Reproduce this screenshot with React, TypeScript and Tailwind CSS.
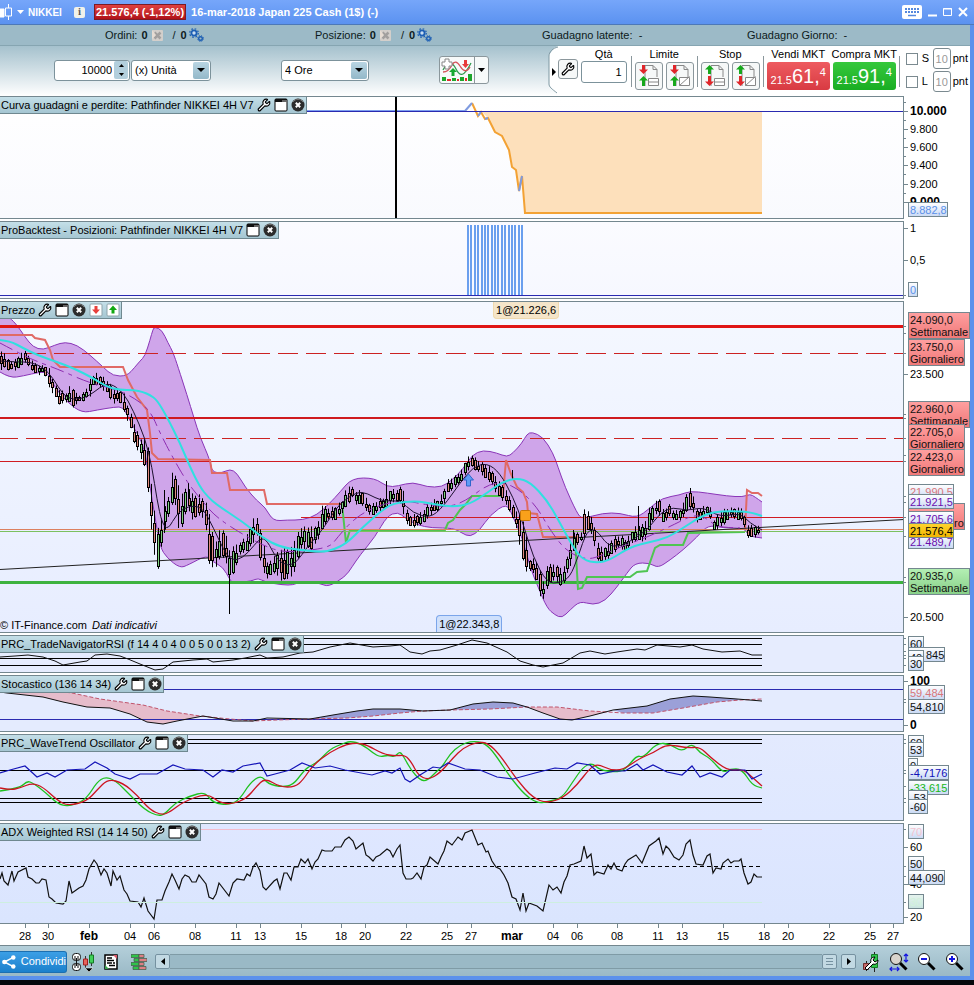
import type { ReactNode } from 'react';
import { Wrench } from 'lucide-react';

type Point = [number, number];

const UPPER: Point[] = [
  [0, 310], [10, 318], [17, 325], [25, 337], [33, 347], [43, 350], [55, 345], [65, 342], [77, 345], [90, 355],
  [103, 367], [113, 376], [127, 376], [135, 367], [140, 361], [145, 356], [150, 340], [153, 329], [155, 327], [162, 330], [168, 343],
  [173, 352], [178, 367], [187, 395], [194, 418], [200, 437], [210, 460], [212, 472], [222, 473], [230, 469], [237, 473],
  [245, 487], [257, 501], [265, 507], [273, 521], [287, 520], [303, 520], [317, 515], [330, 503], [340, 492], [352, 478],
  [375, 478], [387, 487], [398, 486], [413, 482], [427, 487], [442, 487], [452, 480], [463, 469], [472, 455], [483, 450],
  [497, 453], [507, 457], [513, 453], [522, 443], [527, 434], [532, 432], [543, 437], [553, 453], [558, 467], [565, 487],
  [577, 513], [582, 519], [603, 513], [620, 513], [637, 518], [650, 508], [662, 498], [680, 495], [690, 491], [707, 493],
  [727, 496], [743, 497], [750, 494], [755, 497], [762, 502],
];

const LOWER: Point[] = [
  [0, 372], [10, 378], [23, 376], [40, 372], [48, 373], [55, 388], [67, 402], [82, 413], [97, 410], [115, 407],
  [123, 407], [128, 417], [137, 433], [145, 450], [150, 487], [155, 517], [160, 547], [167, 558], [180, 568], [188, 565],
  [207, 555], [213, 562], [223, 567], [230, 580], [233, 583], [252, 581], [258, 578], [265, 582], [283, 585], [293, 585],
  [300, 582], [320, 583], [328, 587], [345, 577], [352, 567], [360, 555], [375, 537], [387, 516], [398, 512], [405, 518],
  [417, 525], [432, 528], [453, 528], [462, 533], [470, 537], [480, 530], [490, 515], [507, 503], [513, 517], [522, 537],
  [530, 567], [538, 587], [547, 608], [555, 615], [562, 618], [570, 610], [580, 601], [593, 605], [605, 601], [617, 587],
  [627, 573], [635, 563], [650, 563], [658, 568], [670, 560], [683, 550], [697, 537], [708, 525], [723, 528], [745, 528],
  [748, 536], [762, 538],
];

const CYAN: Point[] = [
  [0, 340], [10, 341], [23, 348], [37, 355], [57, 362], [73, 368], [93, 378], [107, 387], [120, 390], [134, 390],
  [143, 392], [150, 395], [157, 400], [167, 417], [180, 443], [190, 467], [200, 487], [208, 497], [217, 505], [243, 522],
  [263, 538], [280, 547], [300, 550], [322, 552], [333, 550], [347, 543], [363, 527], [380, 512], [393, 503], [417, 501],
  [433, 504], [453, 507], [470, 504], [487, 493], [502, 482], [517, 478], [530, 482], [547, 500], [560, 523], [573, 547],
  [583, 560], [597, 563], [610, 560], [630, 547], [650, 542], [667, 538], [683, 528], [700, 517], [713, 512], [730, 511],
  [750, 512], [762, 516],
];

const MIDDLE: Point[] = [
  [0, 343], [13, 350], [33, 360], [60, 370], [87, 382], [107, 387], [130, 395], [150, 410], [160, 433], [173, 458],
  [187, 482], [203, 502], [217, 518], [247, 537], [267, 547], [283, 552], [305, 551], [330, 547], [337, 538], [350, 523],
  [363, 513], [380, 505], [403, 500], [427, 505], [450, 507], [467, 500], [487, 485], [503, 482], [520, 490], [537, 507],
  [550, 530], [567, 552], [587, 560], [603, 555], [620, 547], [650, 536], [673, 525], [693, 515], [705, 517], [717, 527],
  [740, 528],
];

const AVERAGE: Point[] = [
  [0, 361], [17, 362], [30, 362], [43, 367], [53, 378], [63, 395], [73, 400], [88, 397], [100, 387], [110, 383],
  [123, 392], [133, 410], [145, 438], [152, 467], [157, 500], [162, 523], [168, 530], [177, 513], [190, 505], [203, 508],
  [213, 527], [227, 557], [237, 561], [248, 553], [260, 538], [267, 540], [277, 560], [288, 566], [297, 562], [307, 547],
  [320, 533], [330, 518], [340, 503], [357, 492], [367, 493], [383, 502], [400, 500], [413, 513], [430, 518], [443, 507],
  [460, 483], [473, 467], [487, 463], [500, 473], [513, 497], [523, 523], [533, 557], [547, 583], [560, 583], [570, 577],
  [578, 557], [587, 530], [597, 530], [607, 545], [620, 547], [637, 537], [650, 527], [660, 513], [673, 507], [687, 511],
  [703, 507], [720, 517], [740, 513], [750, 523], [762, 530],
];

const TRAIL_DOWN: Point[][] = [
  [[0, 335], [32, 335], [35, 338], [45, 340], [50, 350], [53, 360], [60, 367], [123, 367], [128, 380], [137, 397],
    [147, 410], [150, 433], [152, 453], [158, 459], [210, 460], [212, 473], [227, 473], [230, 490], [264, 490], [267, 504], [342, 504]],
  [[503, 495], [506, 460], [511, 474], [517, 487], [523, 492], [527, 502], [528, 513], [537, 514], [543, 537], [577, 537]],
  [[745, 530], [747, 490], [752, 493], [758, 493], [762, 496]],
];

const TRAIL_UP: Point[][] = [
  [[342, 504], [346, 543], [350, 530], [445, 530], [448, 523], [453, 520], [460, 510], [466, 504], [472, 496], [503, 496]],
  [[575, 538], [578, 589], [582, 588], [587, 577], [630, 577], [637, 572], [647, 571], [655, 548], [660, 545], [683, 545], [688, 533], [745, 532]],
];

// x, high, low
const RANGES: [number, number, number][] = [
  [0, 353, 370], [3, 350, 368], [10, 362, 370], [17, 358, 370], [25, 350, 362], [30, 358, 368], [37, 365, 375], [45, 366, 372],
  [49, 368, 388], [55, 385, 395], [60, 390, 405], [67, 393, 402], [71, 384, 402], [73, 388, 408], [78, 396, 402], [85, 392, 400],
  [90, 380, 396], [95, 373, 382], [100, 375, 388], [107, 380, 392], [113, 388, 404], [120, 390, 400], [124, 393, 412], [130, 412, 425],
  [136, 427, 448], [140, 438, 455], [146, 440, 470], [148, 445, 490], [152, 490, 535], [155, 510, 555], [158, 530, 571], [164, 510, 533],
  [168, 500, 520], [173, 467, 500], [177, 480, 510], [180, 490, 538], [184, 495, 520], [187, 485, 508], [193, 495, 520], [200, 495, 515],
  [205, 500, 520], [210, 515, 568], [215, 545, 568], [220, 530, 560], [225, 530, 555], [230, 550, 585], [235, 545, 570], [240, 543, 555],
  [248, 533, 550], [254, 518, 542], [258, 518, 535], [262, 535, 572], [268, 565, 578], [275, 555, 572], [280, 550, 580], [285, 548, 580],
  [290, 550, 578], [295, 540, 572], [300, 528, 550], [305, 527, 548], [312, 527, 550], [318, 525, 540], [322, 505, 530], [328, 508, 520],
  [335, 507, 520], [343, 500, 512], [348, 485, 505], [352, 487, 497], [357, 492, 505], [362, 490, 503], [367, 500, 513], [372, 505, 515],
  [378, 500, 512], [385, 497, 508], [390, 490, 505], [395, 490, 500], [402, 487, 503], [404, 490, 516], [408, 515, 525], [414, 515, 527],
  [421, 513, 525], [427, 506, 520], [433, 500, 512], [439, 500, 510], [444, 490, 505], [448, 480, 492], [455, 476, 488], [462, 470, 480],
  [467, 458, 472], [472, 455, 467], [478, 460, 472], [483, 463, 475], [490, 467, 482], [495, 475, 490], [500, 482, 497], [505, 488, 503],
  [510, 497, 512], [515, 510, 522], [520, 515, 545], [525, 525, 570], [530, 560, 572], [535, 558, 572], [540, 570, 595], [544, 582, 600],
  [548, 562, 585], [553, 565, 580], [558, 565, 582], [562, 570, 588], [567, 560, 575], [571, 540, 565], [576, 530, 545], [581, 535, 542],
  [584, 508, 540], [588, 512, 530], [593, 518, 535], [597, 540, 560], [602, 548, 562], [608, 545, 560], [613, 538, 553], [620, 535, 548],
  [627, 540, 550], [633, 530, 543], [638, 525, 540], [645, 525, 542], [648, 510, 535], [655, 503, 515], [660, 498, 515], [663, 510, 522],
  [670, 505, 517], [675, 512, 520], [682, 508, 520], [688, 490, 510], [692, 488, 508], [697, 510, 522], [703, 507, 518], [710, 505, 515],
  [714, 520, 530], [722, 510, 527], [730, 508, 517], [738, 508, 520], [743, 508, 520], [747, 525, 537], [752, 525, 537], [758, 526, 536],
  [762, 526, 532],
];

const SPIKES: [number, number, number][] = [
  [229.5, 570, 614], [386.5, 481, 500], [638.5, 506, 530], [164.5, 490, 533], [188.5, 483, 500], [512.5, 470, 480], [573.5, 530, 545],
];

const RSI: Point[] = [
  [0, 657], [15, 656], [28, 655], [43, 657], [55, 661], [63, 665], [80, 662], [87, 661], [95, 655], [107, 654],
  [120, 656], [128, 659], [140, 664], [155, 670], [163, 669], [173, 662], [193, 660], [207, 659], [213, 662], [233, 660],
  [245, 658], [260, 655], [267, 658], [283, 657], [300, 653], [313, 652], [330, 647], [350, 643], [373, 647], [390, 646],
  [400, 645], [410, 652], [422, 654], [430, 651], [440, 650], [457, 645], [472, 640], [487, 643], [507, 652], [520, 661],
  [533, 665], [543, 667], [563, 663], [580, 653], [590, 651], [605, 654], [617, 652], [637, 649], [645, 650], [657, 645],
  [680, 647], [692, 645], [703, 649], [722, 652], [740, 651], [752, 655], [762, 655],
];

const STOCH_K: Point[] = [
  [0, 692], [7, 693], [43, 697], [63, 702], [87, 707], [110, 708], [130, 714], [147, 722], [163, 724], [177, 721],
  [203, 716], [233, 721], [253, 721], [267, 718], [310, 719], [333, 715], [357, 711], [373, 709], [400, 709], [423, 711],
  [450, 710], [473, 704], [493, 702], [513, 703], [527, 707], [543, 713], [560, 719], [572, 720], [590, 716], [613, 710],
  [647, 706], [670, 699], [693, 696], [710, 697], [737, 699], [762, 701],
];

const STOCH_D: Point[] = [
  [0, 688], [40, 689], [72, 693], [100, 699], [143, 705], [167, 711], [200, 716], [230, 719], [253, 721], [277, 720],
  [310, 719], [347, 718], [373, 716], [400, 713], [423, 711], [450, 710], [490, 709], [527, 707], [557, 707], [590, 711],
  [608, 712], [623, 713], [653, 713], [683, 708], [717, 702], [740, 700], [762, 699],
];

const WAVE_RED: Point[] = [
  [0, 788], [10, 790], [20, 788], [32, 783], [43, 787], [57, 800], [68, 806], [87, 801], [97, 790], [108, 779],
  [123, 783], [137, 795], [150, 810], [162, 815], [170, 812], [183, 802], [207, 793], [220, 803], [233, 804], [247, 798],
  [256, 787], [265, 778], [280, 787], [295, 787], [303, 780], [313, 765], [330, 752], [347, 744], [358, 743], [367, 745],
  [383, 754], [395, 756], [405, 755], [412, 763], [418, 775], [428, 780], [440, 773], [453, 758], [463, 748], [477, 742],
  [488, 743], [500, 755], [517, 780], [533, 798], [547, 803], [563, 798], [577, 785], [590, 768], [598, 764], [610, 770],
  [623, 770], [640, 758], [653, 753], [667, 744], [687, 748], [700, 747], [710, 757], [728, 771], [743, 769], [752, 777], [762, 786],
];

const WAVE_GREEN: Point[] = [
  [0, 791], [20, 788], [27, 781], [33, 783], [45, 792], [60, 806], [75, 805], [87, 798], [97, 782], [105, 777],
  [115, 780], [130, 795], [145, 810], [158, 816], [165, 814], [175, 803], [190, 796], [205, 792], [213, 803], [230, 805],
  [240, 799], [250, 783], [261, 775], [268, 784], [282, 787], [293, 785], [303, 772], [308, 767], [318, 762], [330, 749],
  [342, 744], [350, 741], [362, 744], [373, 753], [380, 757], [388, 755], [395, 757], [400, 751], [405, 759], [411, 770],
  [420, 780], [427, 781], [437, 771], [442, 767], [450, 754], [460, 745], [472, 741], [485, 743], [495, 754], [510, 777],
  [525, 795], [537, 803], [547, 802], [562, 798], [572, 783], [583, 767], [592, 763], [600, 770], [615, 772], [625, 770],
  [637, 755], [643, 758], [657, 743], [670, 744], [682, 752], [692, 743], [700, 753], [710, 758], [723, 773], [730, 769],
  [742, 769], [752, 785], [762, 788],
];

const WAVE_BLUE: Point[] = [
  [0, 773], [10, 770], [25, 766], [37, 777], [47, 773], [55, 777], [67, 770], [85, 769], [95, 762], [107, 768],
  [115, 774], [130, 779], [140, 774], [157, 774], [173, 765], [185, 769], [203, 770], [213, 777], [222, 770], [233, 772],
  [243, 766], [260, 763], [267, 776], [275, 774], [290, 770], [302, 763], [315, 768], [330, 766], [345, 770], [372, 775],
  [385, 771], [392, 773], [400, 768], [405, 779], [410, 782], [420, 775], [433, 767], [440, 768], [448, 763], [465, 769],
  [480, 770], [497, 777], [513, 779], [535, 773], [555, 768], [567, 769], [577, 763], [590, 765], [600, 774], [615, 771],
  [625, 771], [637, 764], [643, 770], [653, 765], [667, 772], [682, 775], [692, 766], [700, 777], [710, 773], [722, 777],
  [730, 770], [745, 770], [752, 779], [762, 774],
];

const ADX: Point[] = [
  [0, 879], [2, 873], [4, 881], [8, 885], [12, 871], [14, 881], [18, 872], [26, 868], [28, 877], [32, 879], [36, 883],
  [39, 883], [42, 879], [46, 880], [49, 897], [52, 899], [56, 903], [63, 904], [66, 901], [69, 881], [72, 893], [79, 888],
  [83, 886], [86, 880], [89, 869], [94, 860], [97, 864], [101, 875], [104, 869], [107, 873], [111, 886], [113, 871],
  [117, 880], [120, 876], [124, 890], [127, 894], [130, 901], [138, 902], [141, 907], [144, 898], [148, 911], [154, 919],
  [157, 900], [162, 900], [165, 891], [169, 882], [172, 874], [175, 880], [179, 889], [182, 879], [185, 875], [189, 877],
  [192, 882], [196, 882], [199, 875], [206, 884], [209, 897], [213, 899], [216, 894], [219, 883], [229, 896], [233, 883],
  [237, 879], [244, 880], [247, 874], [250, 876], [253, 867], [256, 863], [260, 871], [263, 887], [266, 890], [274, 881],
  [277, 879], [280, 889], [284, 873], [287, 873], [291, 880], [294, 867], [298, 867], [301, 859], [305, 863], [308, 859],
  [312, 869], [315, 862], [318, 859], [322, 850], [325, 851], [332, 851], [335, 847], [341, 847], [345, 840], [349, 837],
  [353, 841], [356, 849], [363, 843], [366, 855], [369, 857], [373, 861], [376, 857], [380, 855], [387, 849], [390, 851],
  [393, 857], [397, 849], [400, 845], [403, 873], [406, 879], [411, 879], [413, 878], [417, 873], [421, 879], [424, 867],
  [427, 865], [430, 857], [438, 864], [441, 857], [444, 851], [447, 841], [452, 845], [458, 837], [462, 840], [465, 833],
  [472, 830], [478, 845], [482, 843], [486, 852], [488, 851], [492, 861], [496, 867], [500, 869], [504, 875], [508, 883],
  [512, 897], [516, 899], [520, 910], [523, 893], [526, 911], [529, 903], [537, 906], [543, 911], [549, 885], [553, 890],
  [557, 887], [561, 893], [564, 882], [567, 876], [570, 865], [574, 864], [581, 861], [584, 846], [587, 858], [591, 854],
  [594, 875], [597, 872], [604, 874], [608, 865], [611, 869], [614, 863], [617, 869], [622, 871], [625, 864], [628, 860],
  [636, 855], [642, 863], [649, 846], [656, 841], [659, 838], [663, 854], [666, 846], [669, 849], [674, 857], [679, 860],
  [683, 855], [686, 844], [690, 840], [693, 855], [696, 864], [703, 865], [707, 856], [710, 854], [713, 873], [716, 868],
  [721, 869], [723, 863], [728, 859], [731, 863], [734, 861], [739, 861], [741, 859], [744, 873], [748, 884], [751, 882],
  [754, 874], [757, 877], [762, 877],
];

const DATES: [string, number][] = [
  ['28', 25], ['30', 48], ['feb', 89], ['04', 130], ['06', 154], ['08', 195], ['11', 236], ['13', 260], ['15', 301],
  ['18', 341], ['20', 365], ['22', 406], ['25', 447], ['27', 471], ['mar', 512], ['04', 553], ['06', 577], ['08', 617],
  ['11', 658], ['13', 682], ['15', 723], ['18', 764], ['20', 788], ['22', 829], ['25', 870], ['27', 893],
];

const toPoints = (points: Point[]) => points.map((p) => p.join(',')).join(' ');

// rounded curve through the middle of every segment
const curve = (points: Point[]) => {
  const mids = points.slice(1, -1).map(([x, y], i) => {
    const [nx, ny] = points[i + 2];
    return `Q${x} ${y} ${(x + nx) / 2} ${(y + ny) / 2}`;
  });
  return `${points[0].join(' ')}${mids.join('')}L${points[points.length - 1].join(' ')}`;
};

// closed area between two series, limited to one x range
const between = (a: Point[], b: Point[], from: number, to: number) => {
  const inside = (p: Point) => p[0] >= from && p[0] <= to;
  return toPoints([...a.filter(inside), ...b.filter(inside).reverse()]);
};

const rangeAt = (x: number): [number, number] => {
  const i = Math.max(1, RANGES.findIndex((r) => r[0] >= x));
  const [x0, h0, l0] = RANGES[i - 1];
  const [x1, h1, l1] = RANGES[i];
  const t = (x - x0) / (x1 - x0);
  return [h0 + (h1 - h0) * t, l0 + (l1 - l0) * t];
};

const CANDLES = Array.from({ length: 223 }, (_, i) => {
  const at = 1.5 + i * 3.41;
  const [high, low] = rangeAt(at);
  const size = low - high;
  const top = Math.round(high + size * (0.1 + 0.17 * (1 + Math.sin(i * 2.3)))) + 0.5;
  const bottom = Math.round(low - size * (0.06 + 0.15 * (1 + Math.cos(i * 1.7)))) + 0.5;
  const [nextHigh] = rangeAt(Math.min(at + 3.4, 761));
  return {
    x: Math.floor(at) + 0.5,
    high: high + Math.sin(i * 3.1),
    low: low + Math.cos(i * 2.9),
    top,
    bottom: Math.max(bottom, top + 1),
    up: nextHigh + Math.sin(i * 5) * 3 < high,
  };
});

/* Icons */

function WindowIcon() {
  return (
    <svg className="w-[14px] h-[14px]" viewBox="0 0 14 14">
      <rect x="1" y="1" width="12" height="12" rx="1" fill="#fff" stroke="#000" />
      <path d="M1 1h12v3H1z" fill="#111" />
      <path d="M8 2h5v2H8z" fill="#666" />
    </svg>
  );
}

function CloseIcon() {
  return (
    <svg className="w-[14px] h-[14px]" viewBox="0 0 14 14">
      <circle cx="7" cy="7" r="6.5" fill="#2c2c2c" />
      <path d="M2 4a6 6 0 0 1 10 0" fill="none" stroke="#777" />
      <path d="M4.8 4.8l4.4 4.4M9.2 4.8L4.8 9.2" stroke="#fff" strokeWidth="2" />
    </svg>
  );
}

function WrenchIcon() {
  return <Wrench className="h-[14px] w-[14px] fill-white stroke-black" />;
}

function ArrowBoxIcon({ up }: { up?: boolean }) {
  return (
    <svg className="w-[14px] h-[14px]" viewBox="0 0 14 14">
      <rect x="1" y="1" width="12" height="12" rx="1" fill="#fff" stroke="#8fa3ab" />
      {up ? (
        <path d="M7 2.500l4 4.500H8.500v3.500h-3V7H3z" fill="#12a812" />
      ) : (
        <path d="M7 11l4-4.500H8.500V3h-3v3.500H3z" fill="#e8403c" />
      )}
    </svg>
  );
}

function GearsIcon() {
  return (
    <svg className="w-[15px] h-[14px]" viewBox="0 0 15 14" fill="none" stroke="#1d5fb4">
      <circle cx="5" cy="5" r="2.600" fill="#c9ddf2" strokeWidth="1.800" />
      <circle cx="5" cy="5" r="4.300" strokeWidth="1.200" strokeDasharray="1.700 1.700" />
      <circle cx="11.500" cy="10.500" r="1.800" strokeWidth="1.400" />
      <circle cx="11.500" cy="10.500" r="2.900" strokeWidth="1" strokeDasharray="1.200 1.100" />
    </svg>
  );
}

function CancelIcon() {
  return (
    <svg className="w-[11px] h-[11px]" viewBox="0 0 11 11">
      <rect width="11" height="11" rx="1" fill="#d3cfcb" />
      <path d="M2.500 2.500l6 6M8.500 2.500l-6 6" stroke="#a2a09f" strokeWidth="2.500" />
      <path d="M0 0l4 5-4 4z" fill="#e6dcd3" />
    </svg>
  );
}

function OrderIcon({ first, second, slash }: { first: string; second: string; slash?: boolean }) {
  return (
    <svg className="w-[24px] h-[24px]" viewBox="0 0 24 24">
      <path d="M8 1.500h8l4 4V13M8 1.500V22M16 1.500v4h4" fill="none" stroke="#888" />
      {slash ? (
        <path d="M11.500 21.500v-8h10v8zM11.500 21.500l10-9" fill="#fff" stroke="#888" />
      ) : (
        <path d="M11.500 14.500h10v7h-10zM11 18h11" fill="#fff" stroke="#888" />
      )}
      {first === 'down' ? (
        <path d="M6.500 10L11 5.500H8V1H5v4.500H2z" fill="#e0262a" />
      ) : (
        <path d="M6.500 1L11 5.500H8V10H5V5.500H2z" fill="#17a81c" />
      )}
      {second === 'down' ? (
        <path d="M6.500 22l4.500-4.500H8V12H5v5.500H2z" fill="#e0262a" />
      ) : (
        <path d="M6.500 12l4.500 4.500H8V22H5v-5.500H2z" fill="#17a81c" />
      )}
    </svg>
  );
}

function IndicatorIcon() {
  return (
    <svg className="w-[34px] h-[26px]" viewBox="0 0 34 26">
      <path d="M3 13c5-9 9-9 13-1s8 8 15-6" fill="none" stroke="#2f9a4e" strokeWidth="1.300" />
      <path d="M3 15c4 0 7-3 9-7s5-4 8 1 7 7 10 1" fill="none" stroke="#d4545a" strokeWidth="1.300" />
      <path d="M24 3h3v4h2l-3.500 4L22 7h2z" fill="#e83b3b" />
      <path d="M13 11l4 4h-2.500v4h-3v-4H9z" fill="#19a832" />
      <path d="M5 2h4v3h3v4H9v3H5V9H2V5h3z" fill="#fff" stroke="#888" />
      <path d="M2 20h4v4H2zM12 21h4v3h-4zM20 20h4v4h-4zM28 17h4v7h-4z" fill="#1ea52c" />
      <path d="M7 22h4v2H7zM17 22h2v2h-2zM25 21h2v3h-2z" fill="#e03030" />
    </svg>
  );
}

function Magnifier({ sign }: { sign: 'minus' | 'plus' | 'fit' }) {
  return (
    <svg className="w-[20px] h-[20px]" viewBox="0 0 20 20" fill="none">
      <path d="M11 11l6.500 6.500" stroke="#000" strokeWidth="3" />
      <circle cx="7" cy="7" r="5.500" fill={sign === 'fit' ? '#d9d4cc' : '#fff'} stroke="#111" />
      {sign === 'minus' && <path d="M4 7h6" stroke="#1313e0" strokeWidth="2" />}
      {sign === 'plus' && <path d="M4 7h6M7 4v6" stroke="#1313e0" strokeWidth="2" />}
      {sign === 'fit' && (
        <path d="M17 2v8M15 4l2-2 2 2M15 8l2 2 2-2M1 17h9M3 15l-2 2 2 2M8 15l2 2-2 2" stroke="#1313e0" strokeWidth="1.200" />
      )}
    </svg>
  );
}

/* Chart building blocks */

interface PanelHeaderProps {
  title: string;
  wrench?: boolean;
  arrows?: boolean;
}

function PanelHeader({ title, wrench = true, arrows }: PanelHeaderProps) {
  return (
    <div className="absolute left-0 top-0 flex h-[17px] items-center gap-[3px] border-r border-b border-[#6f8890] bg-linear-to-b from-[#c4dfe8] to-[#a5c6d2] pr-px pl-px">
      <h2 className="whitespace-nowrap">{title}</h2>
      {wrench && (
        <button aria-label="Impostazioni"><WrenchIcon /></button>
      )}
      <button aria-label="Finestra"><WindowIcon /></button>
      <button aria-label="Chiudi"><CloseIcon /></button>
      {arrows && (
        <>
          <button aria-label="Giù"><ArrowBoxIcon /></button>
          <button aria-label="Su"><ArrowBoxIcon up /></button>
        </>
      )}
    </div>
  );
}

interface Tick {
  y: number;
  text?: string;
  bold?: boolean;
}

interface Tag {
  y: number;
  lines: string[];
  width: number;
  color?: string;
  fill?: string;
  dx?: number;
}

interface PanelProps {
  top: number;
  height: string;
  size: number;
  background: string;
  header: ReactNode;
  ticks: Tick[];
  tags: Tag[];
  overlay?: ReactNode;
  children: ReactNode;
}

function Panel({ top, height, size, background, header, ticks, tags, overlay, children }: PanelProps) {
  return (
    <section className={`mb-[2px] flex ${height}`}>
      <div className={`relative min-w-0 flex-1 border-y border-r border-[#74878f] ${background}`}>
        <svg className="block h-full w-full" viewBox={`0 ${top + 1} 903 ${size - 2}`} preserveAspectRatio="none" fill="none">
          {children}
        </svg>
        {header}
        {overlay}
      </div>
      <svg className="h-full w-[66px] shrink-0 text-[11px]" viewBox={`0 ${top} 66 ${size}`}>
        {ticks.map((t) => (
          <g key={`${t.y}${t.text}`}>
            <path d={`M0 ${t.y + 0.5}h${t.text ? 4 : 2}`} stroke="#74878f" />
            {t.text && (
              <text x="6" y={t.y + 4} className={t.bold ? 'text-[12px] font-bold' : ''}>{t.text}</text>
            )}
          </g>
        ))}
        {tags.map((tag) => (
          <g key={tag.y}>
            <rect x="4.500" y={tag.y + 0.5} width={tag.width} height={tag.lines.length * 12 + 2} fill={tag.fill ?? 'url(#tag)'} stroke="#74878f" />
            {tag.lines.map((line, i) => line && (
              <text key={line} x={6 + (tag.dx ?? 0)} y={tag.y + 12 + i * 12} fill={tag.color ?? '#111'}>{line}</text>
            ))}
          </g>
        ))}
      </svg>
    </section>
  );
}

function EquityPanel() {
  return (
    <Panel
      top={96}
      size={123}
      height="h-[123px]"
      background="bg-linear-to-b from-white to-[#f9fafe]"
      header={<PanelHeader title="Curva guadagni e perdite: Pathfinder NIKKEI 4H V7" />}
      ticks={[
        { y: 102 }, { y: 111, text: '10.000', bold: true }, { y: 120 }, { y: 129, text: '9.800' }, { y: 138 },
        { y: 147, text: '9.600' }, { y: 156 }, { y: 165, text: '9.400' }, { y: 174 }, { y: 184, text: '9.200' },
        { y: 193 }, { y: 202, text: '9.000', bold: true },
      ]}
      tags={[{ y: 202, lines: ['8.882,8'], width: 39, color: '#5a90e8' }]}
    >
      <path d="M481 111L488 118 495 132 502 136 509 150 512 167 516 170 519 191 522 176 525 213H762V111z" fill="#fde0bb" />
      <path d="M0 111H465" stroke="#7d9ff0" strokeWidth="2" />
      <path d="M472 103L478 116 481 112 485 119 488 118 495 132 502 136 509 150 512 167 516 170 519 191 522 176 525 213H762" stroke="#f3a234" strokeWidth="2" />
      <path d="M465 111L472 103M478 116L481 112M485 119L488 118M519 191L522 176" stroke="#7f9be0" strokeWidth="2" />
      <path d="M0 111.500H904" stroke="#2a2ab0" />
      <path d="M396 96V219" stroke="#000" strokeWidth="2" />
    </Panel>
  );
}

function PositionsPanel() {
  return (
    <Panel
      top={221}
      size={78}
      height="h-[78px]"
      background="bg-linear-to-b from-[#fbfbff] to-[#f6f8ff]"
      header={<PanelHeader title="ProBacktest - Posizioni: Pathfinder NIKKEI 4H V7" wrench={false} />}
      ticks={[{ y: 228, text: '1' }, { y: 260, text: '0,5' }, { y: 295 }]}
      tags={[{ y: 282, lines: ['0'], width: 9, color: '#5a90e8' }]}
    >
      {Array.from({ length: 17 }, (_, i) => (
        <path key={i} d={`M${468 + Math.round(i * 3.38)} 225V295`} stroke="#6a9fee" strokeWidth="2" />
      ))}
      <path d="M0 295.500H904" stroke="#2a2ab0" />
    </Panel>
  );
}

function PricePanel() {
  return (
    <Panel
      top={301}
      size={332}
      height="h-[332px]"
      background="bg-linear-to-b from-[#f5f8ff] to-[#e7edff]"
      header={<PanelHeader title="Prezzo" arrows />}
      overlay={
        <>
          <span className="absolute top-0 left-[54.6%] rounded-b-sm border border-t-0 border-[#efd9ae] bg-[#f5e5c9] px-[2px] leading-[16px]">1@21.226,6</span>
          <span className="absolute bottom-0 left-[48.3%] rounded-t-sm border border-b-0 border-[#7ba5ea] bg-[#cfe0fc] px-[2px] leading-[16px]">1@22.343,8</span>
          <p className="absolute bottom-0 left-0 leading-[13px]">© IT-Finance.com <i className="ml-[2px]">Dati indicativi</i></p>
        </>
      }
      ticks={[
        { y: 326 }, { y: 333 }, { y: 353 }, { y: 374, text: '23.500' }, { y: 414 }, { y: 418 }, { y: 438 }, { y: 455 }, { y: 461 },
        { y: 496 }, { y: 502 }, { y: 517 }, { y: 536 }, { y: 577 }, { y: 582 }, { y: 617, text: '20.500' },
      ]}
      tags={[
        { y: 312, lines: ['24.090,0', 'Settimanale'], width: 61, fill: 'url(#red)' },
        { y: 339, lines: ['23.750,0', 'Giornaliero'], width: 56, fill: 'url(#red)' },
        { y: 401, lines: ['22.960,0', 'Settimanale'], width: 61, fill: 'url(#red)' },
        { y: 424, lines: ['22.705,0', 'Giornaliero'], width: 56, fill: 'url(#red)' },
        { y: 449, lines: ['22.423,0', 'Giornaliero'], width: 56, fill: 'url(#red)' },
        { y: 503, lines: ['', 'Giornaliero'], width: 56, fill: 'url(#red)' },
        { y: 484, lines: ['21.990,5'], width: 45, color: '#d8767a' },
        { y: 494, lines: ['21.921,5'], width: 45, color: '#6a0dad' },
        { y: 511, lines: ['21.705,6'], width: 45, color: '#6a0dad' },
        { y: 534, lines: ['21.489,7'], width: 45, color: '#6a0dad' },
        { y: 523, lines: ['21.576,4'], width: 45, color: '#000', fill: 'url(#gold)' },
        { y: 568, lines: ['20.935,0', 'Settimanale'], width: 61, fill: 'url(#green)' },
      ]}
    >
      <path d={`M${curve(UPPER)}L${curve([...LOWER].reverse())}z`} fill="#cfa5ea" />
      <path d={`M${curve(UPPER)}`} stroke="#8a35b8" />
      <path d={`M${curve(LOWER)}`} stroke="#8a35b8" />

      <path d="M0 326.500H904" stroke="#e01515" strokeWidth="3" />
      <path d="M-2 353.500H904M-2 438.500H904" stroke="#cc2222" strokeDasharray="20 8" />
      <path d="M0 418H904" stroke="#cf1a1f" strokeWidth="2" />
      <path d="M0 461.500H904M301 517.500H904" stroke="#d01c22" />
      <path d="M0 582.500H904" stroke="#3db23f" strokeWidth="3" />

      {TRAIL_DOWN.map((t, i) => <polyline key={i} points={toPoints(t)} stroke="#e06a66" strokeWidth="2" />)}
      {TRAIL_UP.map((t, i) => <polyline key={i} points={toPoints(t)} stroke="#4fc552" strokeWidth="2" />)}
      <path d="M0 529.500H904" stroke="#dc8060" />
      <path d="M0 531.500H904" stroke="#7cc060" />
      <path d="M0 569.500L904 519.500" stroke="#222" />

      {SPIKES.map(([x, high, low]) => <path key={x} d={`M${x} ${high}V${low}`} stroke="#000" />)}
      {CANDLES.map((c) => (
        <g key={c.x}>
          <path d={`M${c.x} ${c.high}V${c.low}`} stroke="#000" />
          <rect x={c.x - 1} y={c.top} width="2" height={c.bottom - c.top} fill={c.up ? '#7fd07f' : '#e08a80'} stroke="#000" />
        </g>
      ))}

      <path d={`M${curve(MIDDLE)}`} stroke="#8d2db0" strokeDasharray="14 5 4 5" />
      <path d={`M${curve(AVERAGE)}`} stroke="#1d1030" />
      <path d={`M${curve(CYAN)}`} stroke="#30e0e0" strokeWidth="2" />

      <path d="M468.500 474l5 6h-3v6h-4v-6h-3z" fill="#5f9cf5" stroke="#2f66cc" />
      <rect x="520.500" y="510.500" width="10" height="10" rx="1" fill="#f9a11b" stroke="#c57508" />
    </Panel>
  );
}

function RsiPanel() {
  return (
    <Panel
      top={635}
      size={38}
      height="h-[38px]"
      background="bg-[#e6ecfe]"
      header={<PanelHeader title="PRC_TradeNavigatorRSI (f 14 4 0 4 0 0 5 0 0 13 2)" />}
      ticks={[{ y: 638 }, { y: 644 }, { y: 651 }, { y: 655 }, { y: 658 }, { y: 665 }]}
      tags={[
        { y: 636, lines: ['60'], width: 15 },
        { y: 647, lines: ['845'], width: 36, dx: 16 },
        { y: 650, lines: ['40'], width: 15 },
        { y: 656, lines: ['30'], width: 15 },
      ]}
    >
      <path d="M0 638.500H762M0 644.500H762M0 658.500H762M0 665.500H762" stroke="#000" />
      <polyline points={toPoints(RSI)} stroke="#111" />
    </Panel>
  );
}

function StochasticPanel() {
  return (
    <Panel
      top={675}
      size={57}
      height="h-[57px]"
      background="bg-[#e4ebfe]"
      header={<PanelHeader title="Stocastico (136 14 34)" />}
      ticks={[{ y: 681, text: '100', bold: true }, { y: 699 }, { y: 702 }, { y: 725, text: '0', bold: true }]}
      tags={[
        { y: 685, lines: ['59,484'], width: 36, color: '#d8767a' },
        { y: 699, lines: ['54,810'], width: 36 },
      ]}
    >
      <polygon points={between(STOCH_K, STOCH_D, 0, 203)} fill="#e6bccb" />
      <polygon points={between(STOCH_K, STOCH_D, 527, 609)} fill="#e6bccb" />
      <polygon points={between(STOCH_K, STOCH_D, 310, 423)} fill="#9ba0d8" />
      <polygon points={between(STOCH_K, STOCH_D, 450, 527)} fill="#9ba0d8" />
      <polygon points={between(STOCH_K, STOCH_D, 613, 740)} fill="#9ba0d8" />
      <path d="M0 689.500H904M0 719.500H904" stroke="#2a2ab0" />
      <polyline points={toPoints(STOCH_D)} stroke="#c0546c" strokeDasharray="4 2" />
      <polyline points={toPoints(STOCH_K)} stroke="#111" />
    </Panel>
  );
}

function WavePanel() {
  return (
    <Panel
      top={734}
      size={87}
      height="h-[87px]"
      background="bg-linear-to-b from-[#e3eafe] to-[#dfe8ff]"
      header={<PanelHeader title="PRC_WaveTrend Oscillator" />}
      ticks={[{ y: 739 }, { y: 743 }, { y: 770 }, { y: 773 }, { y: 786 }, { y: 798 }, { y: 802 }]}
      tags={[
        { y: 735, lines: ['60'], width: 15 },
        { y: 742, lines: ['53'], width: 15 },
        { y: 758, lines: ['0'], width: 9 },
        { y: 765, lines: ['-4,7176'], width: 40, color: '#1010b8' },
        { y: 780, lines: ['-33,615'], width: 40, color: '#18b818' },
        { y: 790, lines: ['-53'], width: 19 },
        { y: 799, lines: ['-60'], width: 19 },
      ]}
    >
      <path d="M0 739.500H762M0 743.500H762M0 770.500H762M0 798.500H762M0 802.500H762" stroke="#000" />
      <path d={`M${curve(WAVE_GREEN)}`} stroke="#1fc21f" strokeWidth="1.300" />
      <path d={`M${curve(WAVE_RED)}`} stroke="#cc1420" strokeWidth="1.300" />
      <polyline points={toPoints(WAVE_BLUE)} stroke="#1414b8" strokeWidth="1.200" />
    </Panel>
  );
}

function AdxPanel() {
  return (
    <Panel
      top={823}
      size={101}
      height="h-[101px]"
      background="bg-linear-to-b from-[#dfe7ff] to-[#dae5fe]"
      header={<PanelHeader title="ADX Weighted RSI (14 14 50)" />}
      ticks={[{ y: 829 }, { y: 847, text: '60' }, { y: 866 }, { y: 876 }, { y: 884, text: '40' }, { y: 902 }, { y: 917, text: '20' }]}
      tags={[
        { y: 824, lines: ['70'], width: 15, color: '#f3c3cf' },
        { y: 856, lines: ['50'], width: 15 },
        { y: 870, lines: ['44,090'], width: 36 },
        { y: 894, lines: ['30'], width: 15, fill: 'url(#mint)', color: '#d2f2dc' },
      ]}
    >
      <path d="M0 829.500H762" stroke="#f4bccb" />
      <path d="M0 866.500H762" stroke="#000" strokeDasharray="4 3" />
      <polyline points={toPoints(ADX)} stroke="#111" strokeWidth="1.200" />
      <path d="M0 902.500H762" stroke="#cdefdf" />
    </Panel>
  );
}

function TimeAxis() {
  return (
    <div className="mt-[-2px] flex h-[21px] pr-[66px]">
      <svg className="h-full w-full overflow-visible text-[11px]">
        {DATES.map(([label, x]) => (
          <g key={x}>
            <rect x={`${(x / 904) * 100}%`} width="1" height="4" fill="#74878f" />
            <text x={`${(x / 904) * 100}%`} y="16" textAnchor="middle" className={isNaN(Number(label)) ? 'text-[12px] font-bold' : ''}>
              {label}
            </text>
          </g>
        ))}
      </svg>
    </div>
  );
}

/* Window chrome */

function TitleBar() {
  return (
    <header className="flex h-[25px] items-center border-b border-[#4d79b8] bg-linear-to-b from-[#76a6fa] to-[#5b92f0] pr-[6px] font-bold text-white">
      <svg className="h-[18px] w-[13px]" viewBox="0 0 13 18" fill="none" stroke="#fff">
        <path d="M0 6h4v8H0z" fill="#fff" />
        <path d="M8.500 1v4M8.500 13v4M5.500 5h6v8h-6z" />
      </svg>
      <svg className="ml-[4px] h-[4px] w-[7px]" viewBox="0 0 7 4"><path d="M0 0h7L3.500 4z" fill="#fff" /></svg>
      <h1 className="ml-[4px] w-[46px] text-[10px]">NIKKEI</h1>
      <button aria-label="Informazioni" className="h-[11px] w-[11px] rounded-xs bg-[#f2f2ea] font-serif text-[10px] leading-[11px] text-[#555]">i</button>
      <span className="ml-[9px] border border-[#7c1a24] bg-linear-to-b from-[#e04040] to-[#b01018] px-px leading-[14px]">21.576,4 (-1,12%)</span>
      <span className="ml-[5px] whitespace-nowrap">16-mar-2018 Japan 225 Cash (1$) (-)</span>
      <div className="ml-auto flex items-center gap-[6px]">
        <button aria-label="Tastiera">
          <svg className="h-[14px] w-[20px]" viewBox="0 0 20 14">
            <rect width="20" height="14" rx="2" fill="#fff" />
            <path d="M3 4h14M3 7h14" stroke="#5588dd" strokeWidth="2" strokeDasharray="2 1" />
            <path d="M6 10.500h8" stroke="#5588dd" strokeWidth="1.500" />
          </svg>
        </button>
        <button aria-label="Riduci"><svg className="h-[10px] w-[9px]" viewBox="0 0 9 10"><path d="M0 8.500h9" stroke="#fff" strokeWidth="2" /></svg></button>
        <button aria-label="Ingrandisci"><svg className="h-[10px] w-[9px]" viewBox="0 0 9 10"><path d="M.5 1.500h8v7h-8zM0 2h9" fill="none" stroke="#fff" /></svg></button>
        <button aria-label="Chiudi finestra"><svg className="h-[10px] w-[10px]" viewBox="0 0 10 10"><path d="M1 1l8 8M9 1L1 9" stroke="#fff" strokeWidth="2" /></svg></button>
      </div>
    </header>
  );
}

function OrderCount({ label }: { label: string }) {
  return (
    <div className="flex items-center">
      {label} <b className="ml-[4px]">0</b>
      <button aria-label="Annulla" className="mx-[4px]"><CancelIcon /></button>
      <span className="ml-[6px]">/</span>
      <b className="ml-[5px]">0</b>
      <button aria-label="Automatici" className="ml-[2px]"><GearsIcon /></button>
    </div>
  );
}

function StatsBar() {
  return (
    <div className="grid h-[21px] grid-cols-[210fr_227fr_205fr_223fr] items-center border-b border-[#86a5b1] bg-[#9cbac7] pl-[105px] text-[#0d1a20]">
      <OrderCount label="Ordini:" />
      <OrderCount label="Posizione:" />
      <p>Guadagno latente: &nbsp;-</p>
      <p>Guadagno Giorno: &nbsp;-</p>
    </div>
  );
}

function DropDown({ label, option, width }: { label: string; option: string; width: string }) {
  return (
    <div className={`relative ${width}`}>
      <select aria-label={label} className="h-[21px] w-full appearance-none rounded-[3px] border border-[#7c929b] bg-white pl-[3px]">
        <option>{option}</option>
      </select>
      <span className="pointer-events-none absolute top-[2px] right-[2px] flex h-[17px] w-[16px] items-center justify-center rounded-[2px] bg-linear-to-b from-[#b9d5e2] to-[#93b8c9]">
        <svg className="h-[4px] w-[8px]" viewBox="0 0 8 4"><path d="M0 0h8L4 4z" /></svg>
      </span>
    </div>
  );
}

function OrderPair({ title, first, second }: { title: string; first: string; second: string }) {
  return (
    <div className="flex flex-col items-center gap-px">
      <span className="leading-[14px]">{title}</span>
      <div className="flex gap-[3px]">
        <button aria-label={`${title} semplice`} className="rounded-[3px] border border-[#8b979c] bg-[#f6f8f8] p-px"><OrderIcon first={first} second={second} /></button>
        <button aria-label={`${title} obliquo`} className="rounded-[3px] border border-[#8b979c] bg-[#f6f8f8] p-px"><OrderIcon first={first} second={second} slash /></button>
      </div>
    </div>
  );
}

function MarketButton({ title, big, color }: { title: string; big: string; color: string }) {
  return (
    <div className="flex w-[63px] flex-col items-center gap-px">
      <span className="leading-[14px] whitespace-nowrap">{title}</span>
      <button className={`flex h-[28px] w-full items-center justify-center rounded-[3px] text-white ${color}`}>
        <span className="self-end pb-[3px]">21.5</span>
        <span className="text-[20px]">{big},</span>
        <span className="self-start pt-[4px]">4</span>
      </button>
    </div>
  );
}

function PointsRow({ name }: { name: string }) {
  return (
    <div className="flex items-center">
      <input id={`pt-${name}`} type="checkbox" className="h-[12px] w-[12px] appearance-none border border-[#7b8a90] bg-white" />
      <label htmlFor={`pt-${name}`} className="ml-[4px] w-[11px]">{name}</label>
      <input aria-label={`Punti ${name}`} defaultValue="10" className="h-[21px] w-[18px] rounded-[3px] border border-[#7b8a90] bg-white text-center text-[#999]" />
      <span className="ml-[2px]">pnt</span>
    </div>
  );
}

function Divider() {
  return <span className="mx-[3px] h-[31px] w-px self-center bg-[#8a979c]" />;
}

function Toolbar() {
  return (
    <div className="flex h-[50px] items-stretch bg-linear-to-b from-[#a5c1cd] to-white">
      <div className="flex flex-1 items-center pb-[2px] pl-[54px]">
        <div className="flex h-[21px] w-[76px] items-center rounded-[3px] border border-[#7c929b] bg-white pr-px">
          <input aria-label="Capitale" defaultValue="10000" className="w-0 flex-1 text-right" />
          <span className="ml-[2px] flex flex-col rounded-[2px] bg-[#b3cfdc]">
            <button aria-label="Aumenta" className="flex h-[9px] w-[14px] items-center justify-center">
              <svg className="h-[3px] w-[5px]" viewBox="0 0 5 3"><path d="M0 3h5L2.500 0z" /></svg>
            </button>
            <button aria-label="Diminuisci" className="flex h-[9px] w-[14px] items-center justify-center">
              <svg className="h-[3px] w-[5px]" viewBox="0 0 5 3"><path d="M0 0h5L2.500 3z" /></svg>
            </button>
          </span>
        </div>
        <div className="ml-px"><DropDown label="Unità" option="(x) Unità" width="w-[80px]" /></div>
        <div className="ml-[70px]"><DropDown label="Periodo" option="4 Ore" width="w-[88px]" /></div>
        <div className="ml-[70px] flex h-[28px] items-center rounded-[3px] border border-[#8b979c] bg-[#f7fafa]">
          <button aria-label="Indicatori"><IndicatorIcon /></button>
          <button aria-label="Altri indicatori" className="flex h-full w-[14px] items-center justify-center border-l border-[#8b979c]">
            <svg className="h-[4px] w-[7px]" viewBox="0 0 7 4"><path d="M0 0h7L3.500 4z" /></svg>
          </button>
        </div>
      </div>

      <svg className="h-full w-[11px]" viewBox="0 0 11 50">
        <path d="M11 0L7 2 2 9V39l5 6 4 5z" fill="#fff" />
        <path d="M11 1C6 2 2 6 2 10v28c0 3 3 5 8 9" fill="none" stroke="#7f98a2" />
        <path d="M5 22v8l4-4z" />
      </svg>
      <div className="flex items-start bg-white pt-px pr-[2px]">
        <button aria-label="Impostazioni ordine" className="mt-[12px] rounded-[3px] border border-[#8b979c] bg-[#f6f8f8] p-[2px]">
          <WrenchIcon />
        </button>
        <label className="mr-px ml-[3px] flex flex-col items-center leading-[14px]">
          Qtà
          <input defaultValue="1" className="h-[22px] w-[46px] rounded-[3px] border border-[#7c929b] bg-white pr-[4px] text-right" />
        </label>
        <Divider />
        <OrderPair title="Limite" first="down" second="up" />
        <Divider />
        <OrderPair title="Stop" first="up" second="down" />
        <Divider />
        <div className="flex gap-[3px]">
          <MarketButton title="Vendi MKT" big="61" color="bg-linear-to-b from-[#ee5b60] to-[#d83a42]" />
          <MarketButton title="Compra MKT" big="91" color="bg-linear-to-b from-[#35c83c] to-[#18ad22]" />
        </div>
        <Divider />
        <div className="ml-[3px] flex flex-col gap-[2px] pt-px">
          <PointsRow name="S" />
          <PointsRow name="L" />
        </div>
      </div>
    </div>
  );
}

function BottomBar() {
  return (
    <footer className="flex h-[31px] items-center border-t border-[#74878f] bg-linear-to-b from-[#b4cfda] to-[#9ab9c6] pt-px pr-[5px]">
      <button className="flex h-[22px] w-[67px] items-center gap-[5px] rounded-r-[3px] border border-l-0 border-[#1c6fb0] bg-linear-to-b from-[#3b9fe6] to-[#1b80cc] pl-[2px] text-white">
        <svg className="h-[14px] w-[14px]" viewBox="0 0 14 14" fill="#fff">
          <path d="M12 2L2.500 7l9.500 5" fill="none" stroke="#fff" strokeWidth="1.500" />
          <circle cx="11.500" cy="2.500" r="2.300" /><circle cx="2.500" cy="7" r="2.400" /><circle cx="11.500" cy="11.500" r="2.300" />
        </svg>
        Condividi
      </button>
      <button aria-label="Collega grafici" className="ml-[5px]">
        <svg className="h-[20px] w-[23px]" viewBox="0 0 23 20">
          <g fill="none" stroke="#111">
            <rect x=".5" y="1.500" width="8" height="7" rx="3" fill="#fff" /><rect x=".5" y="11.500" width="8" height="7" rx="3" fill="#fff" />
            <path d="M3 4v4M6 4v4M3 12v4M6 12v4M4.500 6v8" />
          </g>
          <path d="M13.500 4v12M19.500 0v14" stroke="#333" />
          <path d="M11.500 7h4v6h-4z" fill="#e8635b" stroke="#a02020" />
          <path d="M17.500 3h4v8h-4z" fill="#3fd058" stroke="#157a25" />
          <path d="M13 16h8l-4 4z" fill="#000" stroke="#fff" strokeWidth=".5" />
        </svg>
      </button>
      <button aria-label="Lista" className="ml-[9px]">
        <svg className="h-[16px] w-[14px]" viewBox="0 0 14 16">
          <path d="M1 1h12v14H1z" fill="#fff" stroke="#000" strokeWidth="1.500" />
          <path d="M3 4h5M3 6.500h7M3 9h5M5 11.500h6M9 9h2" stroke="#000" strokeWidth="1.500" />
          <path d="M9 1h4v4z" fill="#d45a6a" /><path d="M1 11l4 4H1z" fill="#3aa04a" />
        </svg>
      </button>
      <button aria-label="Book ordini" className="ml-[13px]">
        <svg className="h-[16px] w-[16px]" viewBox="0 0 16 16" stroke="#3d5a45" strokeWidth=".7">
          <path d="M0 .5h8v3H0zM3 4.500h5v3H3zM0 8.500h8v3H0zM2 12.500h6v3H2z" fill="#2fc44a" />
          <path d="M8 .5h5v3H8zM8 4.500h8v3H8zM8 8.500h5v3H8zM8 12.500h7v3H8z" fill="#de7f84" />
        </svg>
      </button>
      <button aria-label="Scorri a sinistra" className="ml-[8px] flex h-[15px] w-[15px] items-center justify-center rounded-[2px] border border-[#7591a0] bg-[#c2d9e3]">
        <svg className="h-[7px] w-[4px]" viewBox="0 0 4 7"><path d="M4 0v7L0 3.500z" /></svg>
      </button>
      <div className="h-[15px] flex-1 border-y border-[#7f9ba6] bg-[#9ab9c6]" />
      <button aria-label="Barra" className="flex h-[15px] w-[15px] items-center justify-center rounded-[2px] border border-[#7591a0] bg-[#c2d9e3]">
        <svg className="h-[7px] w-[7px]" viewBox="0 0 7 7"><path d="M0 .5h7M0 3.500h7M0 6.500h7" stroke="#7591a0" /></svg>
      </button>
      <button aria-label="Scorri a destra" className="ml-[4px] flex h-[15px] w-[15px] items-center justify-center rounded-[2px] border border-[#7591a0] bg-[#c2d9e3]">
        <svg className="h-[7px] w-[4px]" viewBox="0 0 4 7"><path d="M0 0v7l4-3.500z" /></svg>
      </button>
      <div className="ml-[7px] flex items-center gap-[8px]">
        <button aria-label="Opzioni grafico" className="mr-[2px]">
          <svg className="h-[20px] w-[16px]" viewBox="0 0 16 20">
            <path d="M11.500 0v20M3.500 9v10" stroke="#222" />
            <path d="M8.500 2.500h6v13h-6z" fill="#2fc44a" stroke="#157a25" />
            <path d="M.5 11.500h5v6h-5z" fill="#c96a6a" stroke="#6d3030" />
            <path d="M2 16l6-6c-1-3 1-5 4-5l-2 3 2 2 3-2c0 3-2 5-5 4l-6 6z" fill="#fff" stroke="#000" />
          </svg>
        </button>
        <button aria-label="Adatta"><Magnifier sign="fit" /></button>
        <button aria-label="Riduci zoom"><Magnifier sign="minus" /></button>
        <button aria-label="Aumenta zoom"><Magnifier sign="plus" /></button>
      </div>
    </footer>
  );
}

function Gradients() {
  const stops = [
    ['tag', '#ffffff', '#c9d9f4'],
    ['red', '#ffa0a0', '#f07878'],
    ['green', '#b4efb4', '#88d088'],
    ['gold', '#ffd530', '#f0b400'],
    ['mint', '#e6f4ee', '#c9e4e0'],
  ];
  return (
    <svg className="absolute h-0 w-0">
      <defs>
        {stops.map(([id, from, to]) => (
          <linearGradient key={id} id={id} x2="0" y2="1">
            <stop stopColor={from} />
            <stop offset="1" stopColor={to} />
          </linearGradient>
        ))}
      </defs>
    </svg>
  );
}

export default function App() {
  return (
    <div className="border-b-[5px] border-[#05080c] bg-white font-['Liberation_Sans',Arial,sans-serif] text-[11px] leading-[13px] text-black">
      <Gradients />
      <TitleBar />
      <div className="border-r-4 border-b-4 border-[#5b91ec]">
        <StatsBar />
        <Toolbar />
        <main>
          <EquityPanel />
          <PositionsPanel />
          <PricePanel />
          <RsiPanel />
          <StochasticPanel />
          <WavePanel />
          <AdxPanel />
          <TimeAxis />
        </main>
        <BottomBar />
      </div>
    </div>
  );
}
